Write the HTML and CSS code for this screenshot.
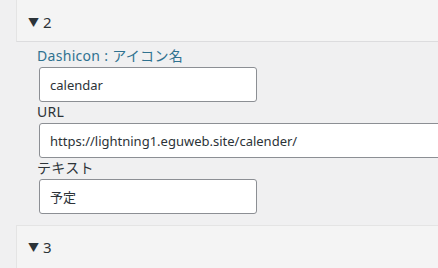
FILE: index.html
```html
<!DOCTYPE html>
<html lang="ja">
<head>
  <meta charset="UTF-8">
  <meta name="viewport" content="width=device-width, initial-scale=1.0">
  <title>Menu items</title>
  <link rel="stylesheet" href="styles.css">
</head>
<body>
  <div class="item">
    <div class="item-head"><span class="arrow">▼</span> 2</div>
  </div>
  <div class="item-body">
    <label class="field-label dashicon" for="icon">Dashicon : アイコン名</label>
    <input class="field short" id="icon" type="text" value="calendar">
    <label class="field-label" for="url">URL</label>
    <input class="field wide" id="url" type="text" value="https://lightning1.eguweb.site/calender/">
    <label class="field-label" for="text">テキスト</label>
    <input class="field short" id="text" type="text" value="予定">
  </div>
  <div class="item">
    <div class="item-head"><span class="arrow">▼</span> 3</div>
  </div>
</body>
</html>
```

FILE: styles.css
```css
body {
  margin: 0;
  background-color: #f0f0f1;
  font-family: "Noto Sans", "Noto Sans CJK JP", sans-serif;
  font-size: 14px;
  color: #2c3338;
  overflow: hidden;
}

.item {
  margin-left: 16px;
}

.item-head {
  height: 41px;
  line-height: 44px;
  padding-left: 11px;
  background-color: #f4f4f4;
  border-left: 1px solid #e4e4e4;
  border-bottom: 1px solid #dcdcde;
  font-size: 15px;
}

.arrow {
  font-size: 11px;
  vertical-align: 1px;
}

.item + .item-body {
  padding: 4px 0 11px 39px;
}

.item-body + .item .item-head {
  border-top: 1px solid #e4e4e4;
  height: 44px;
  line-height: 43px;
}

.field-label {
  display: block;
  height: 21px;
  line-height: 20px;
  margin-left: -2px;
  letter-spacing: 0.3px;
}

.field-label.dashicon {
  color: #2f7290;
}

.field {
  display: block;
  box-sizing: border-box;
  height: 35px;
  padding: 0 10px;
  border: 1px solid #8c8f94;
  border-radius: 3px;
  background-color: #fff;
  font-family: inherit;
  font-size: 13px;
  color: #2c3338;
}

.field.short {
  width: 218px;
}

.field.wide {
  width: 420px;
}
```
